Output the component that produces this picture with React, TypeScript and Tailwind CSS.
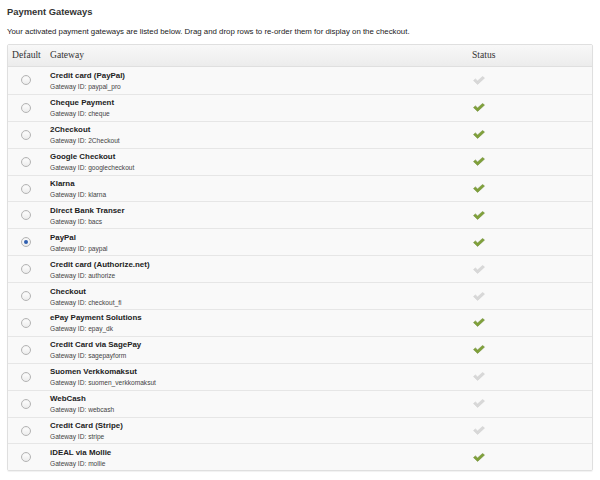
import React from 'react';

type Gateway = { name: string; id: string; enabled: boolean; isDefault?: boolean };

const GATEWAYS: Gateway[] = [
  { name: 'Credit card (PayPal)', id: 'paypal_pro', enabled: false },
  { name: 'Cheque Payment', id: 'cheque', enabled: true },
  { name: '2Checkout', id: '2Checkout', enabled: true },
  { name: 'Google Checkout', id: 'googlecheckout', enabled: true },
  { name: 'Klarna', id: 'klarna', enabled: true },
  { name: 'Direct Bank Transer', id: 'bacs', enabled: true },
  { name: 'PayPal', id: 'paypal', enabled: true, isDefault: true },
  { name: 'Credit card (Authorize.net)', id: 'authorize', enabled: false },
  { name: 'Checkout', id: 'checkout_fi', enabled: false },
  { name: 'ePay Payment Solutions', id: 'epay_dk', enabled: true },
  { name: 'Credit Card via SagePay', id: 'sagepayform', enabled: true },
  { name: 'Suomen Verkkomaksut', id: 'suomen_verkkomaksut', enabled: false },
  { name: 'WebCash', id: 'webcash', enabled: false },
  { name: 'Credit Card (Stripe)', id: 'stripe', enabled: false },
  { name: 'iDEAL via Mollie', id: 'mollie', enabled: true },
];

// ---------------------------------------------------------------------------
// Small bits: radio + status tick
// ---------------------------------------------------------------------------

function Radio({ checked }: { checked?: boolean }) {
  return (
    <span className="flex h-[10px] w-[10px] items-center justify-center rounded-full border border-[#b4b4b4] bg-gradient-to-b from-white to-[#ececec] shadow-[inset_0_1px_1px_rgba(0,0,0,0.06)]">
      {checked && <span className="h-[4px] w-[4px] rounded-full bg-[#2f5fb0]" />}
    </span>
  );
}

function Tick({ on }: { on: boolean }) {
  return (
    <svg width="12" height="9" viewBox="0 0 12 9">
      <path
        d="M0.5 4.6 L2.4 2.9 L4.6 4.9 L9.6 0.4 L11.5 2.1 L4.6 8.4 Z"
        fill={on ? '#80a13a' : '#d8d8d8'}
        stroke={on ? '#63822a' : '#cccccc'}
        strokeWidth="0.5"
        strokeLinejoin="round"
      />
    </svg>
  );
}

export default function App() {
  return (
    <div className="h-[480px] w-[600px] overflow-hidden bg-white text-[#333]" style={{ fontFamily: '"Liberation Sans", Arial, sans-serif' }}>
      <div className="px-[7px] pt-[5px]">
        <h2 className="text-[9.4px] font-bold leading-[14px] text-[#333]">Payment Gateways</h2>
        <p className="mt-[7px] text-[7.85px] leading-[12px] text-[#222]">
          Your activated payment gateways are listed below. Drag and drop rows to re-order them for display on the checkout.
        </p>

        <div className="mt-[6px] w-[586px] overflow-hidden rounded-[2px] border border-[#dfdfdf] shadow-[0_1px_1px_rgba(0,0,0,0.06)]">
          <div
            className="flex h-[22px] items-center border-b border-[#dfdfdf] bg-gradient-to-b from-[#f8f8f8] to-[#ececec] text-[9.6px] text-[#333]"
            style={{ fontFamily: '"Liberation Serif", Georgia, serif' }}
          >
            <span className="w-[42px] pl-[4px]">Default</span>
            <span className="flex-1">Gateway</span>
            <span className="w-[120px]">Status</span>
          </div>

          {GATEWAYS.map((g, i) => (
            <div key={g.id} className={`flex h-[26.9px] items-center bg-[#f9f9f9] ${i > 0 ? 'border-t border-[#e6e6e6]' : ''}`}>
              <div className="flex w-[42px] pl-[13px]">
                <Radio checked={g.isDefault} />
              </div>
              <div className="flex flex-1 flex-col">
                <span className="text-[7.9px] font-bold leading-[11px] text-[#222]">{g.name}</span>
                <span className="mt-[1px] text-[6.6px] leading-[9px] text-[#444]">Gateway ID: {g.id}</span>
              </div>
              <div className="w-[120px] pl-[1px]">
                <Tick on={g.enabled} />
              </div>
            </div>
          ))}
        </div>
      </div>
    </div>
  );
}
